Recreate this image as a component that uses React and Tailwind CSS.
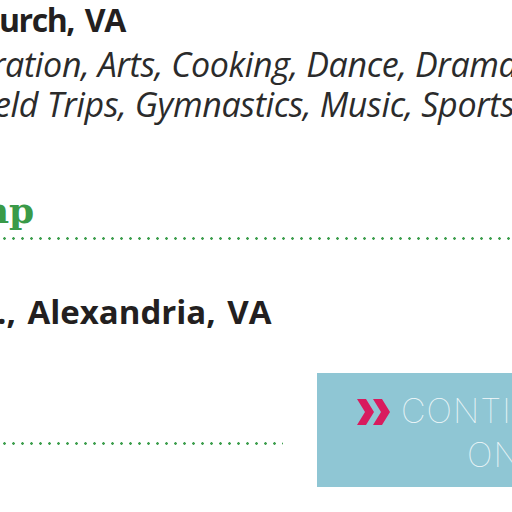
export default function App() {
  const dots = "h-[3px] bg-[radial-gradient(circle,#3f9f4f_1px,transparent_1.6px)] bg-[length:9px_3px] bg-repeat-x";

  return (
    <div className="w-[512px] h-[512px] overflow-hidden bg-white">
      <div className="flex flex-col whitespace-nowrap">
        {/* address + programs */}
        <div className="font-['Open_Sans',sans-serif] text-[32px] leading-[40px] font-bold text-[#231f20] tracking-[-0.045em] [word-spacing:4px] -ml-[1px]">
          urch, VA
        </div>
        <div className="mt-[4px] font-['Open_Sans',sans-serif] italic text-[34px] leading-[40px] text-[#2b2b2b] tracking-[-0.01em] -ml-[8px]">
          ration, Arts, Cooking, Dance, Drama
        </div>
        <div className="font-['Open_Sans',sans-serif] italic text-[34px] leading-[40px] text-[#2b2b2b] tracking-[-0.01em] -ml-[6px]">
          eld Trips, Gymnastics, Music, Sports
        </div>

        {/* next camp */}
        <div className="mt-[66px] font-['DejaVu_Serif',serif] font-bold text-[36px] leading-[40px] text-[#3a9a48] -ml-[29px]">
          mp
        </div>
        <div className={`mt-[7px] w-full ${dots}`}></div>

        <div className="mt-[52px] font-['Open_Sans',sans-serif] text-[33px] leading-[40px] font-bold text-[#231f20] [word-spacing:3px] -ml-[3px]">
          ., Alexandria, VA
        </div>

        <div className="mt-[41px] flex items-start">
          <div className={`mt-[69px] w-[283px] shrink-0 ${dots}`}></div>
          <div className="ml-[34px] w-[320px] h-[114px] shrink-0 bg-[#8fc6d4] pt-[16px] pl-[40px] font-['Inter',sans-serif] font-thin text-[34px] leading-[44px] text-white/90 tracking-[0.03em]">
            <div className="flex items-center gap-[11px]">
              <svg width="33" height="26" viewBox="0 0 33 26" className="shrink-0 mt-[1px]">
                <polygon points="0,0 9,0 17,13 9,26 0,26 8,13" fill="#d81b5e" />
                <polygon points="16,0 25,0 33,13 25,26 16,26 24,13" fill="#d81b5e" />
              </svg>
              <span>CONTINUE READING</span>
            </div>
            <div className="pl-[110px]">ONLINE</div>
          </div>
        </div>
      </div>
    </div>
  );
}
